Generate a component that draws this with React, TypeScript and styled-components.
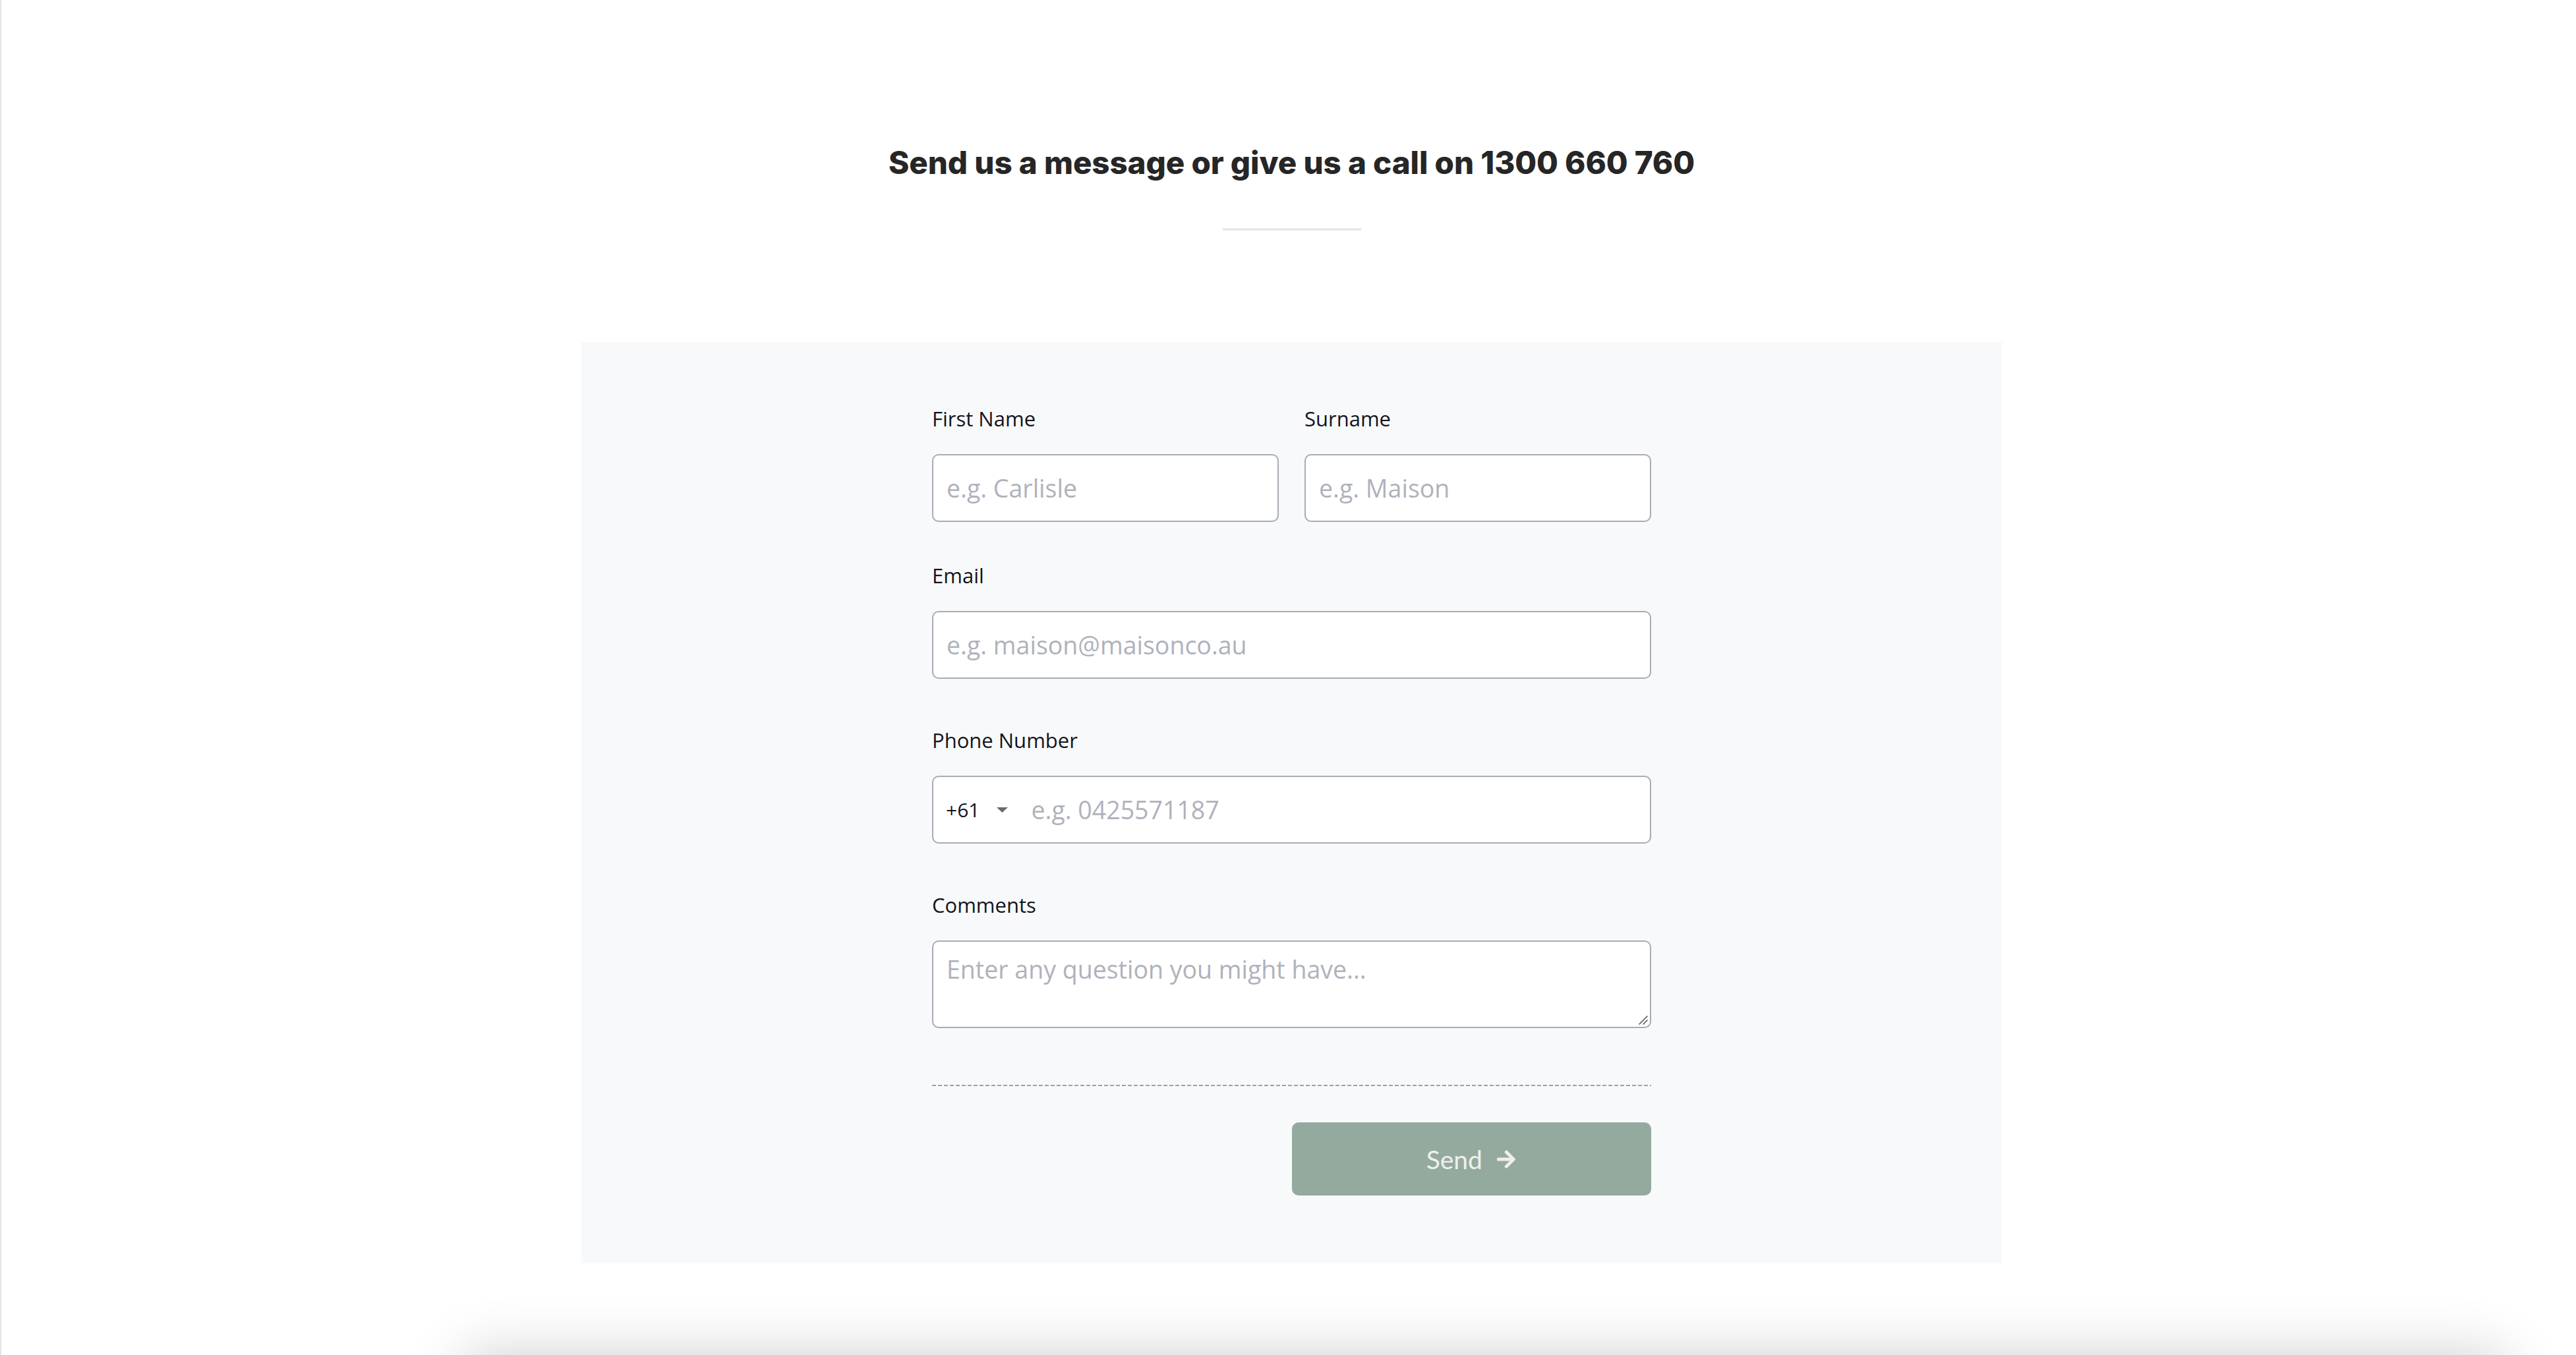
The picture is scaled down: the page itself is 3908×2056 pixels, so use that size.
import styled, { createGlobalStyle } from "styled-components";
import { FaArrowRight } from "react-icons/fa";

const GlobalStyle = createGlobalStyle`
  html, body {
    margin: 0;
    padding: 0;
    background: #ffffff;
    overflow: hidden;
  }
  * {
    box-sizing: border-box;
  }
`;

const Page = styled.div`
  min-height: 2056px;
  border-left: 2px solid #e4e4e4;
  padding: 218px 0 0 9px;
  font-family: "Open Sans", sans-serif;
`;

const Heading = styled.h2`
  margin: 0;
  text-align: center;
  font-family: Inter, "Open Sans", sans-serif;
  font-weight: 800;
  font-size: 47.5px;
  line-height: 58px;
  letter-spacing: -0.1px;
  color: #262626;
`;

const Divider = styled.hr`
  width: 210px;
  height: 4px;
  margin: 70px auto 0;
  border: 0;
  background: #e8e8e8;
`;

const Panel = styled.section`
  width: 2155px;
  margin: 169px auto 0;
  padding: 95px 0 103px;
  background: #f8f9fa;
`;

const Form = styled.form`
  width: 1091px;
  margin: 0 auto;
  display: flex;
  flex-direction: column;
`;

const NameRow = styled.div`
  display: grid;
  grid-template-columns: 1fr 1fr;
  gap: 39px;
  margin-bottom: 60px;
`;

const Field = styled.div<{ $after?: number }>`
  position: relative;
  display: flex;
  flex-direction: column;
  margin-bottom: ${(props) => props.$after ?? 0}px;
`;

const Label = styled.label`
  font-size: 31px;
  line-height: 42px;
  color: #14141d;
  margin-bottom: 33px;
`;

const TextInput = styled.input`
  width: 100%;
  height: 103px;
  padding: 0 20px;
  border: 2px solid #a9abb5;
  border-radius: 10px;
  background: #ffffff;
  font-family: "Open Sans", sans-serif;
  font-size: 37.5px;
  color: #1b1b24;
  outline: none;
  &::placeholder {
    color: #afb2bc;
  }
`;

const PhoneBox = styled.div`
  display: flex;
  align-items: center;
  height: 103px;
  padding-left: 19px;
  border: 2px solid #a9abb5;
  border-radius: 10px;
  background: #ffffff;
`;

const CountryCode = styled.button`
  display: flex;
  align-items: center;
  gap: 26px;
  padding: 0;
  border: 0;
  background: transparent;
  font-family: "Open Sans", sans-serif;
  font-size: 30px;
  color: #14141d;
`;

const PhoneInput = styled.input`
  flex: 1;
  min-width: 0;
  height: 100%;
  margin-left: 35px;
  padding: 0;
  border: 0;
  background: transparent;
  font-family: "Open Sans", sans-serif;
  font-size: 37.5px;
  color: #1b1b24;
  outline: none;
  &::placeholder {
    color: #afb2bc;
  }
`;

const Comments = styled.textarea`
  width: 100%;
  height: 133px;
  padding: 16px 20px;
  border: 2px solid #a9abb5;
  border-radius: 10px;
  background: #ffffff;
  font-family: "Open Sans", sans-serif;
  font-size: 37.5px;
  color: #1b1b24;
  resize: none;
  outline: none;
  &::placeholder {
    color: #afb2bc;
  }
`;

const Grip = styled.svg`
  position: absolute;
  right: 5px;
  bottom: 5px;
  pointer-events: none;
`;

const DashedRule = styled.div`
  height: 2px;
  margin-top: 86px;
  background: repeating-linear-gradient(
    90deg,
    #9ea1ac 0 6px,
    transparent 6px 9px
  );
`;

const SendButton = styled.button`
  width: 50%;
  height: 111px;
  margin: 55px 0 0 auto;
  display: flex;
  align-items: center;
  justify-content: center;
  gap: 20px;
  border: 0;
  border-radius: 10px;
  background: #95aa9f;
  color: #eef0ec;
  font-family: Lato, "Open Sans", sans-serif;
  font-size: 39px;
  cursor: pointer;
`;

const NextCard = styled.div`
  width: 3100px;
  height: 400px;
  margin: 140px 0 0 690px;
  border-radius: 20px;
  background: #ffffff;
  box-shadow: 0 0 90px rgba(0, 0, 0, 0.2);
`;

function Caret() {
  return (
    <svg width="17" height="8" viewBox="0 0 17 8">
      <polygon points="0,0 17,0 8.5,8" fill="#6b6b70" />
    </svg>
  );
}

export default function App() {
  return (
    <>
      <GlobalStyle />
      <Page>
        <Heading>Send us a message or give us a call on 1300 660 760</Heading>
        <Divider />
        <Panel>
          <Form onSubmit={(e) => e.preventDefault()}>
            <NameRow>
              <Field>
                <Label>First Name</Label>
                <TextInput placeholder="e.g. Carlisle" />
              </Field>
              <Field>
                <Label>Surname</Label>
                <TextInput placeholder="e.g. Maison" />
              </Field>
            </NameRow>
            <Field $after={72}>
              <Label>Email</Label>
              <TextInput placeholder="e.g. maison@maisonco.au" />
            </Field>
            <Field $after={72}>
              <Label>Phone Number</Label>
              <PhoneBox>
                <CountryCode type="button">
                  +61
                  <Caret />
                </CountryCode>
                <PhoneInput placeholder="e.g. 0425571187" />
              </PhoneBox>
            </Field>
            <Field>
              <Label>Comments</Label>
              <Comments placeholder="Enter any question you might have..." />
              <Grip width="16" height="16" viewBox="0 0 16 16">
                <path
                  d="M15 3 L3 15 M15 9 L9 15"
                  stroke="#555"
                  strokeWidth="1.6"
                  strokeLinecap="round"
                />
              </Grip>
            </Field>
            <DashedRule />
            <SendButton type="submit">
              Send
              <FaArrowRight size={32} />
            </SendButton>
          </Form>
        </Panel>
        <NextCard />
      </Page>
    </>
  );
}
